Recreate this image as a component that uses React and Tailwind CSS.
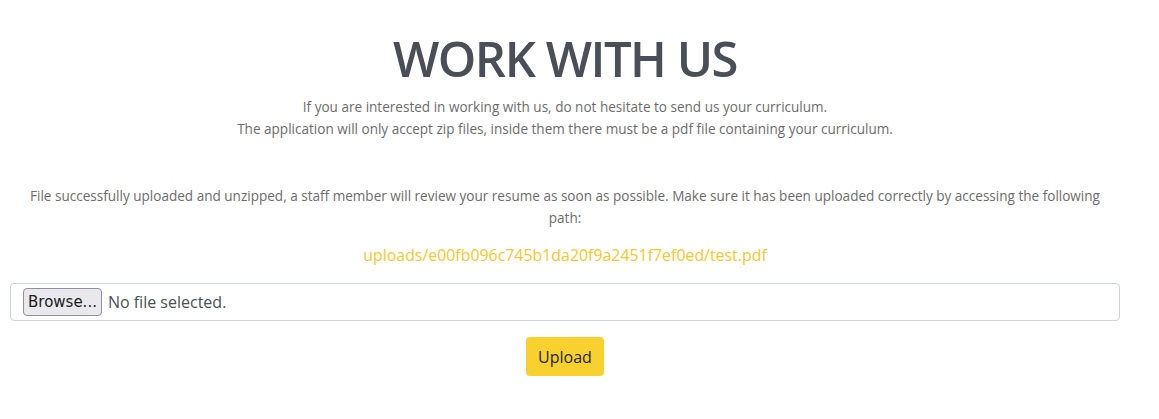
export default function App() {
  return (
    <div className="w-[1159px] h-[419px] bg-white" style={{ fontFamily: '"Open Sans", "Noto Sans", sans-serif' }}>
      <div className="ml-[10px] w-[1110px] flex flex-col items-center">
        <h1 className="mt-[28px] text-[49px] leading-[60px] font-semibold text-[#4a4f57] tracking-[-1.5px]">WORK WITH US</h1>
        <p className="mt-[8px] text-[13.55px] leading-[22px] text-[#6c6c6c] text-center">
          If you are interested in working with us, do not hesitate to send us your curriculum.
          <br />
          The application will only accept zip files, inside them there must be a pdf file containing your curriculum.
        </p>
        <p className="mt-[45px] w-[1090px] text-[13.55px] leading-[22px] text-[#6c6c6c] text-center">
          File successfully uploaded and unzipped, a staff member will review your resume as soon as possible. Make sure it has been uploaded correctly by accessing the following path:
        </p>
        <a className="mt-[15px] text-[15.9px] leading-[22px] text-[#f6c730]">uploads/e00fb096c745b1da20f9a2451f7ef0ed/test.pdf</a>
        <div className="mt-[17px] w-[1110px] h-[38px] border border-[#ced4da] rounded-[4px] flex items-center px-[12px]">
          <span className="h-[28px] px-[4px] border border-[#8f8f9d] rounded-[4px] bg-[#e9e9ed] text-[15px] leading-[26px] text-[#1b1b1b]" style={{ fontFamily: '"DejaVu Sans", sans-serif' }}>Browse...</span>
          <span className="ml-[6px] text-[16px] text-[#495057]">No file selected.</span>
        </div>
        <button className="mt-[16px] h-[39px] px-[12px] bg-[#f9d12f] rounded-[4px] text-[16px] text-[#212529]">Upload</button>
      </div>
    </div>
  );
}
